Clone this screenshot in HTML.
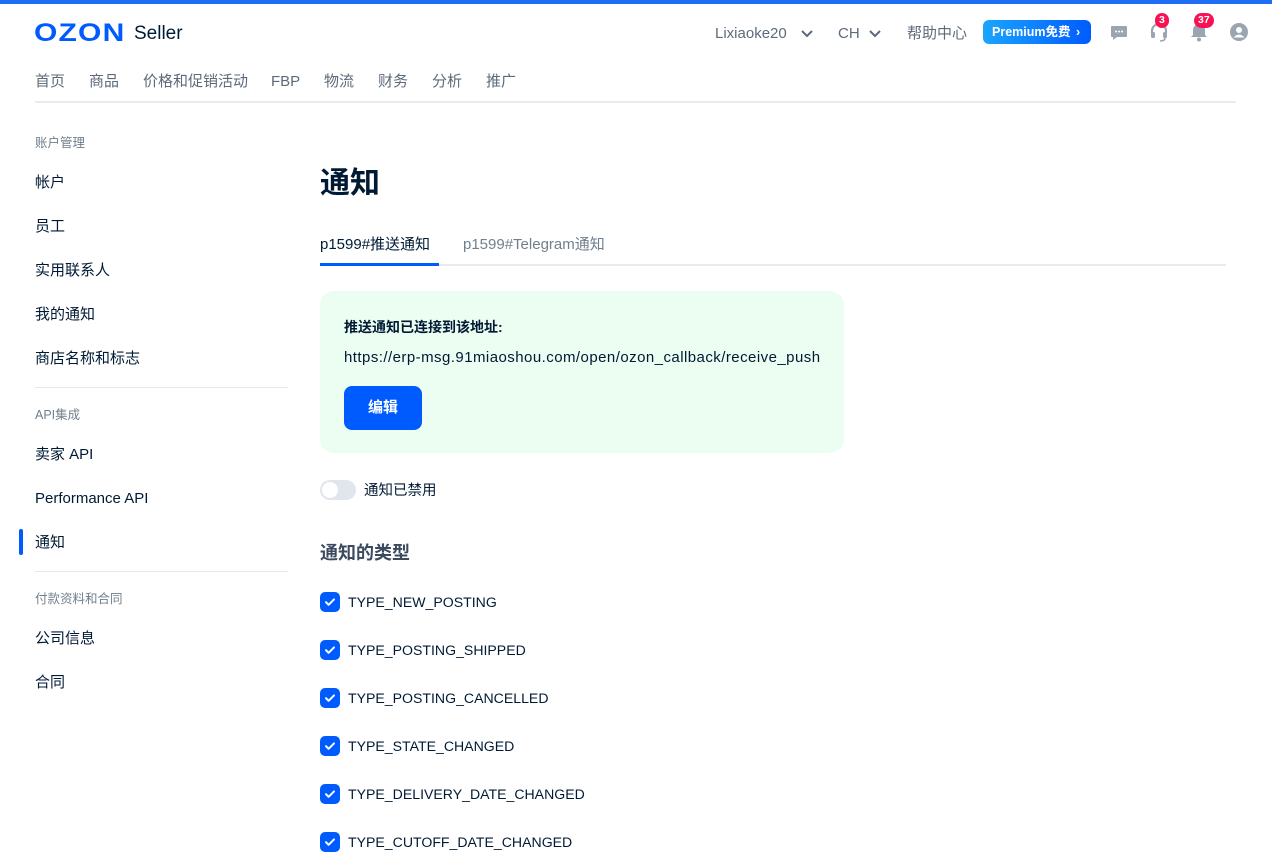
<!DOCTYPE html><html><head><meta charset="utf-8"><style>
*{margin:0;padding:0;box-sizing:border-box}
body{width:1272px;height:861px;overflow:hidden;background:#fff;font-family:"Liberation Sans","Noto Sans CJK SC",sans-serif;color:#001a34;position:relative}
.a{position:absolute;white-space:nowrap;line-height:20px}
.t{margin-top:2px}
.nav{color:#5d6a7a;font-size:15px;top:70px;margin-top:2px}
.side{font-size:15px;color:#001a34;left:35px;margin-top:2px}
.sh{font-size:12.5px;color:#707f8d;left:35px;margin-top:2px}
.cb{position:absolute;left:320px;width:20px;height:20px;border-radius:5px;background:#005bff}
.cb svg{position:absolute;left:3px;top:3px}
.ct{left:348px;font-size:14.1px;color:#001a34;margin-top:0}
.gi{position:absolute;width:20px;height:20px}
.badge{position:absolute;height:15px;border-radius:8px;background:#f91155;color:#fff;font-size:10.5px;font-weight:bold;text-align:center;line-height:15px;padding:0 4px}
</style></head><body>
<div class="a" style="left:0;top:0;width:1272px;height:4px;background:#1f6cf5"></div>
<div class="a" style="left:34px;top:21px;font-size:25px;line-height:25px;font-weight:900;color:#005bff;letter-spacing:1px;transform:scaleX(1.2);transform-origin:left">OZON</div>
<div class="a" style="left:134px;top:24px;font-size:19px;color:#001a34">Seller</div>
<div class="a t" style="left:715px;top:22px;font-size:15px;color:#5d6a7a">Lixiaoke20</div>
<svg class="gi" style="left:797px;top:23px" viewBox="0 0 20 20"><path d="M5 8l5 5 5-5" stroke="#5d6a7a" stroke-width="2" fill="none"/></svg>
<div class="a t" style="left:838px;top:22px;font-size:15px;color:#5d6a7a">CH</div>
<svg class="gi" style="left:865px;top:23px" viewBox="0 0 20 20"><path d="M5 8l5 5 5-5" stroke="#5d6a7a" stroke-width="2" fill="none"/></svg>
<div class="a t" style="left:907px;top:22px;font-size:15px;color:#5d6a7a">帮助中心</div>
<div class="a" style="left:983px;top:20px;width:108px;height:24px;border-radius:6px;background:linear-gradient(90deg,#1aa5ff,#005bff);color:#fff;font-size:12.5px;font-weight:bold;line-height:24px;padding-left:9px">Premium免费 <span style="margin-left:2px">›</span></div>
<svg class="gi" style="left:1109px;top:22px" viewBox="0 0 20 20"><path d="M3 4h14a1 1 0 011 1v9a1 1 0 01-1 1H8l-4 3v-3H3a1 1 0 01-1-1V5a1 1 0 011-1z" fill="#9aa5b1"/><circle cx="7" cy="9.5" r="1" fill="#fff"/><circle cx="10" cy="9.5" r="1" fill="#fff"/><circle cx="13" cy="9.5" r="1" fill="#fff"/></svg>
<svg class="gi" style="left:1149px;top:22px" viewBox="0 0 20 20"><path d="M3 11V9a7 7 0 0114 0v2" stroke="#9aa5b1" stroke-width="2.2" fill="none"/><rect x="2" y="10" width="4" height="6" rx="1.5" fill="#9aa5b1"/><rect x="14" y="10" width="4" height="6" rx="1.5" fill="#9aa5b1"/><path d="M16 16q0 3-5 3" stroke="#9aa5b1" stroke-width="1.6" fill="none"/></svg>
<div class="badge" style="left:1155px;top:13px">3</div>
<svg class="gi" style="left:1189px;top:22px" viewBox="0 0 20 20"><path d="M10 2a6 6 0 016 6v5l2 2H2l2-2V8a6 6 0 016-6z" fill="#9aa5b1"/><circle cx="10" cy="17.5" r="2" fill="#9aa5b1"/></svg>
<div class="badge" style="left:1194px;top:13px">37</div>
<svg class="gi" style="left:1229px;top:22px" viewBox="0 0 20 20"><circle cx="10" cy="10" r="9" fill="#9aa5b1"/><circle cx="10" cy="8" r="3" fill="#fff"/><path d="M4.5 15.5q5.5-6 11 0" fill="#fff"/></svg>
<div class="a nav" style="left:35px">首页</div>
<div class="a nav" style="left:89px">商品</div>
<div class="a nav" style="left:143px">价格和促销活动</div>
<div class="a nav" style="left:271px">FBP</div>
<div class="a nav" style="left:324px">物流</div>
<div class="a nav" style="left:378px">财务</div>
<div class="a nav" style="left:432px">分析</div>
<div class="a nav" style="left:486px">推广</div>
<div class="a" style="left:35px;top:101px;width:1201px;height:2px;background:#e8ebef"></div>

<div class="a sh" style="top:131px">账户管理</div>
<div class="a side" style="top:171px">帐户</div>
<div class="a side" style="top:215px">员工</div>
<div class="a side" style="top:259px">实用联系人</div>
<div class="a side" style="top:303px">我的通知</div>
<div class="a side" style="top:347px">商店名称和标志</div>
<div class="a" style="left:35px;top:387px;width:253px;height:1px;background:#e4e8ec"></div>
<div class="a sh" style="top:403px">API集成</div>
<div class="a side" style="top:443px">卖家 API</div>
<div class="a side" style="top:487px">Performance API</div>
<div class="a" style="left:19px;top:529px;width:4px;height:26px;border-radius:2px;background:#005bff"></div>
<div class="a side" style="top:531px">通知</div>
<div class="a" style="left:35px;top:571px;width:253px;height:1px;background:#e4e8ec"></div>
<div class="a sh" style="top:587px">付款资料和合同</div>
<div class="a side" style="top:627px">公司信息</div>
<div class="a side" style="top:671px">合同</div>

<div class="a" style="left:320px;top:167px;font-size:30px;line-height:34px;font-weight:bold;color:#001a34">通知</div>
<div class="a t" style="left:320px;top:233px;font-size:15px;color:#001a34">p1599#推送通知</div>
<div class="a t" style="left:463px;top:233px;font-size:15px;color:#707f8d">p1599#Telegram通知</div>
<div class="a" style="left:320px;top:264px;width:906px;height:2px;background:#e8ebef"></div>
<div class="a" style="left:320px;top:263px;width:119px;height:3px;background:#005bff"></div>
<div class="a" style="left:320px;top:291px;width:524px;height:162px;border-radius:14px;background:#ecfdf1"></div>
<div class="a" style="left:344px;top:317px;font-size:14px;font-weight:bold">推送通知已连接到该地址:</div>
<div class="a" style="left:344px;top:348px;font-size:15px;letter-spacing:0.45px">https://erp-msg.91miaoshou.com/open/ozon_callback/receive_push</div>
<div class="a" style="left:344px;top:386px;width:78px;height:44px;border-radius:8px;background:#005bff;color:#fff;font-size:15px;font-weight:bold;text-align:center;line-height:44px">编辑</div>
<div class="a" style="left:320px;top:480px;width:36px;height:20px;border-radius:10px;background:#e1e6ec"></div>
<div class="a" style="left:322px;top:482px;width:16px;height:16px;border-radius:8px;background:#fff"></div>
<div class="a t" style="left:364px;top:479px;font-size:14.5px">通知已禁用</div>
<div class="a" style="left:320px;top:543px;font-size:18px;font-weight:bold;color:#3b4a5f">通知的类型</div>
<div class="cb" style="top:592px"><svg width="14" height="14" viewBox="0 0 14 14"><path d="M3 7.2l2.6 2.6L11 4.4" stroke="#fff" stroke-width="2" fill="none" stroke-linecap="round" stroke-linejoin="round"/></svg></div><div class="a ct" style="top:592px">TYPE_NEW_POSTING</div>
<div class="cb" style="top:640px"><svg width="14" height="14" viewBox="0 0 14 14"><path d="M3 7.2l2.6 2.6L11 4.4" stroke="#fff" stroke-width="2" fill="none" stroke-linecap="round" stroke-linejoin="round"/></svg></div><div class="a ct" style="top:640px">TYPE_POSTING_SHIPPED</div>
<div class="cb" style="top:688px"><svg width="14" height="14" viewBox="0 0 14 14"><path d="M3 7.2l2.6 2.6L11 4.4" stroke="#fff" stroke-width="2" fill="none" stroke-linecap="round" stroke-linejoin="round"/></svg></div><div class="a ct" style="top:688px">TYPE_POSTING_CANCELLED</div>
<div class="cb" style="top:736px"><svg width="14" height="14" viewBox="0 0 14 14"><path d="M3 7.2l2.6 2.6L11 4.4" stroke="#fff" stroke-width="2" fill="none" stroke-linecap="round" stroke-linejoin="round"/></svg></div><div class="a ct" style="top:736px">TYPE_STATE_CHANGED</div>
<div class="cb" style="top:784px"><svg width="14" height="14" viewBox="0 0 14 14"><path d="M3 7.2l2.6 2.6L11 4.4" stroke="#fff" stroke-width="2" fill="none" stroke-linecap="round" stroke-linejoin="round"/></svg></div><div class="a ct" style="top:784px">TYPE_DELIVERY_DATE_CHANGED</div>
<div class="cb" style="top:832px"><svg width="14" height="14" viewBox="0 0 14 14"><path d="M3 7.2l2.6 2.6L11 4.4" stroke="#fff" stroke-width="2" fill="none" stroke-linecap="round" stroke-linejoin="round"/></svg></div><div class="a ct" style="top:832px">TYPE_CUTOFF_DATE_CHANGED</div>
</body></html>
